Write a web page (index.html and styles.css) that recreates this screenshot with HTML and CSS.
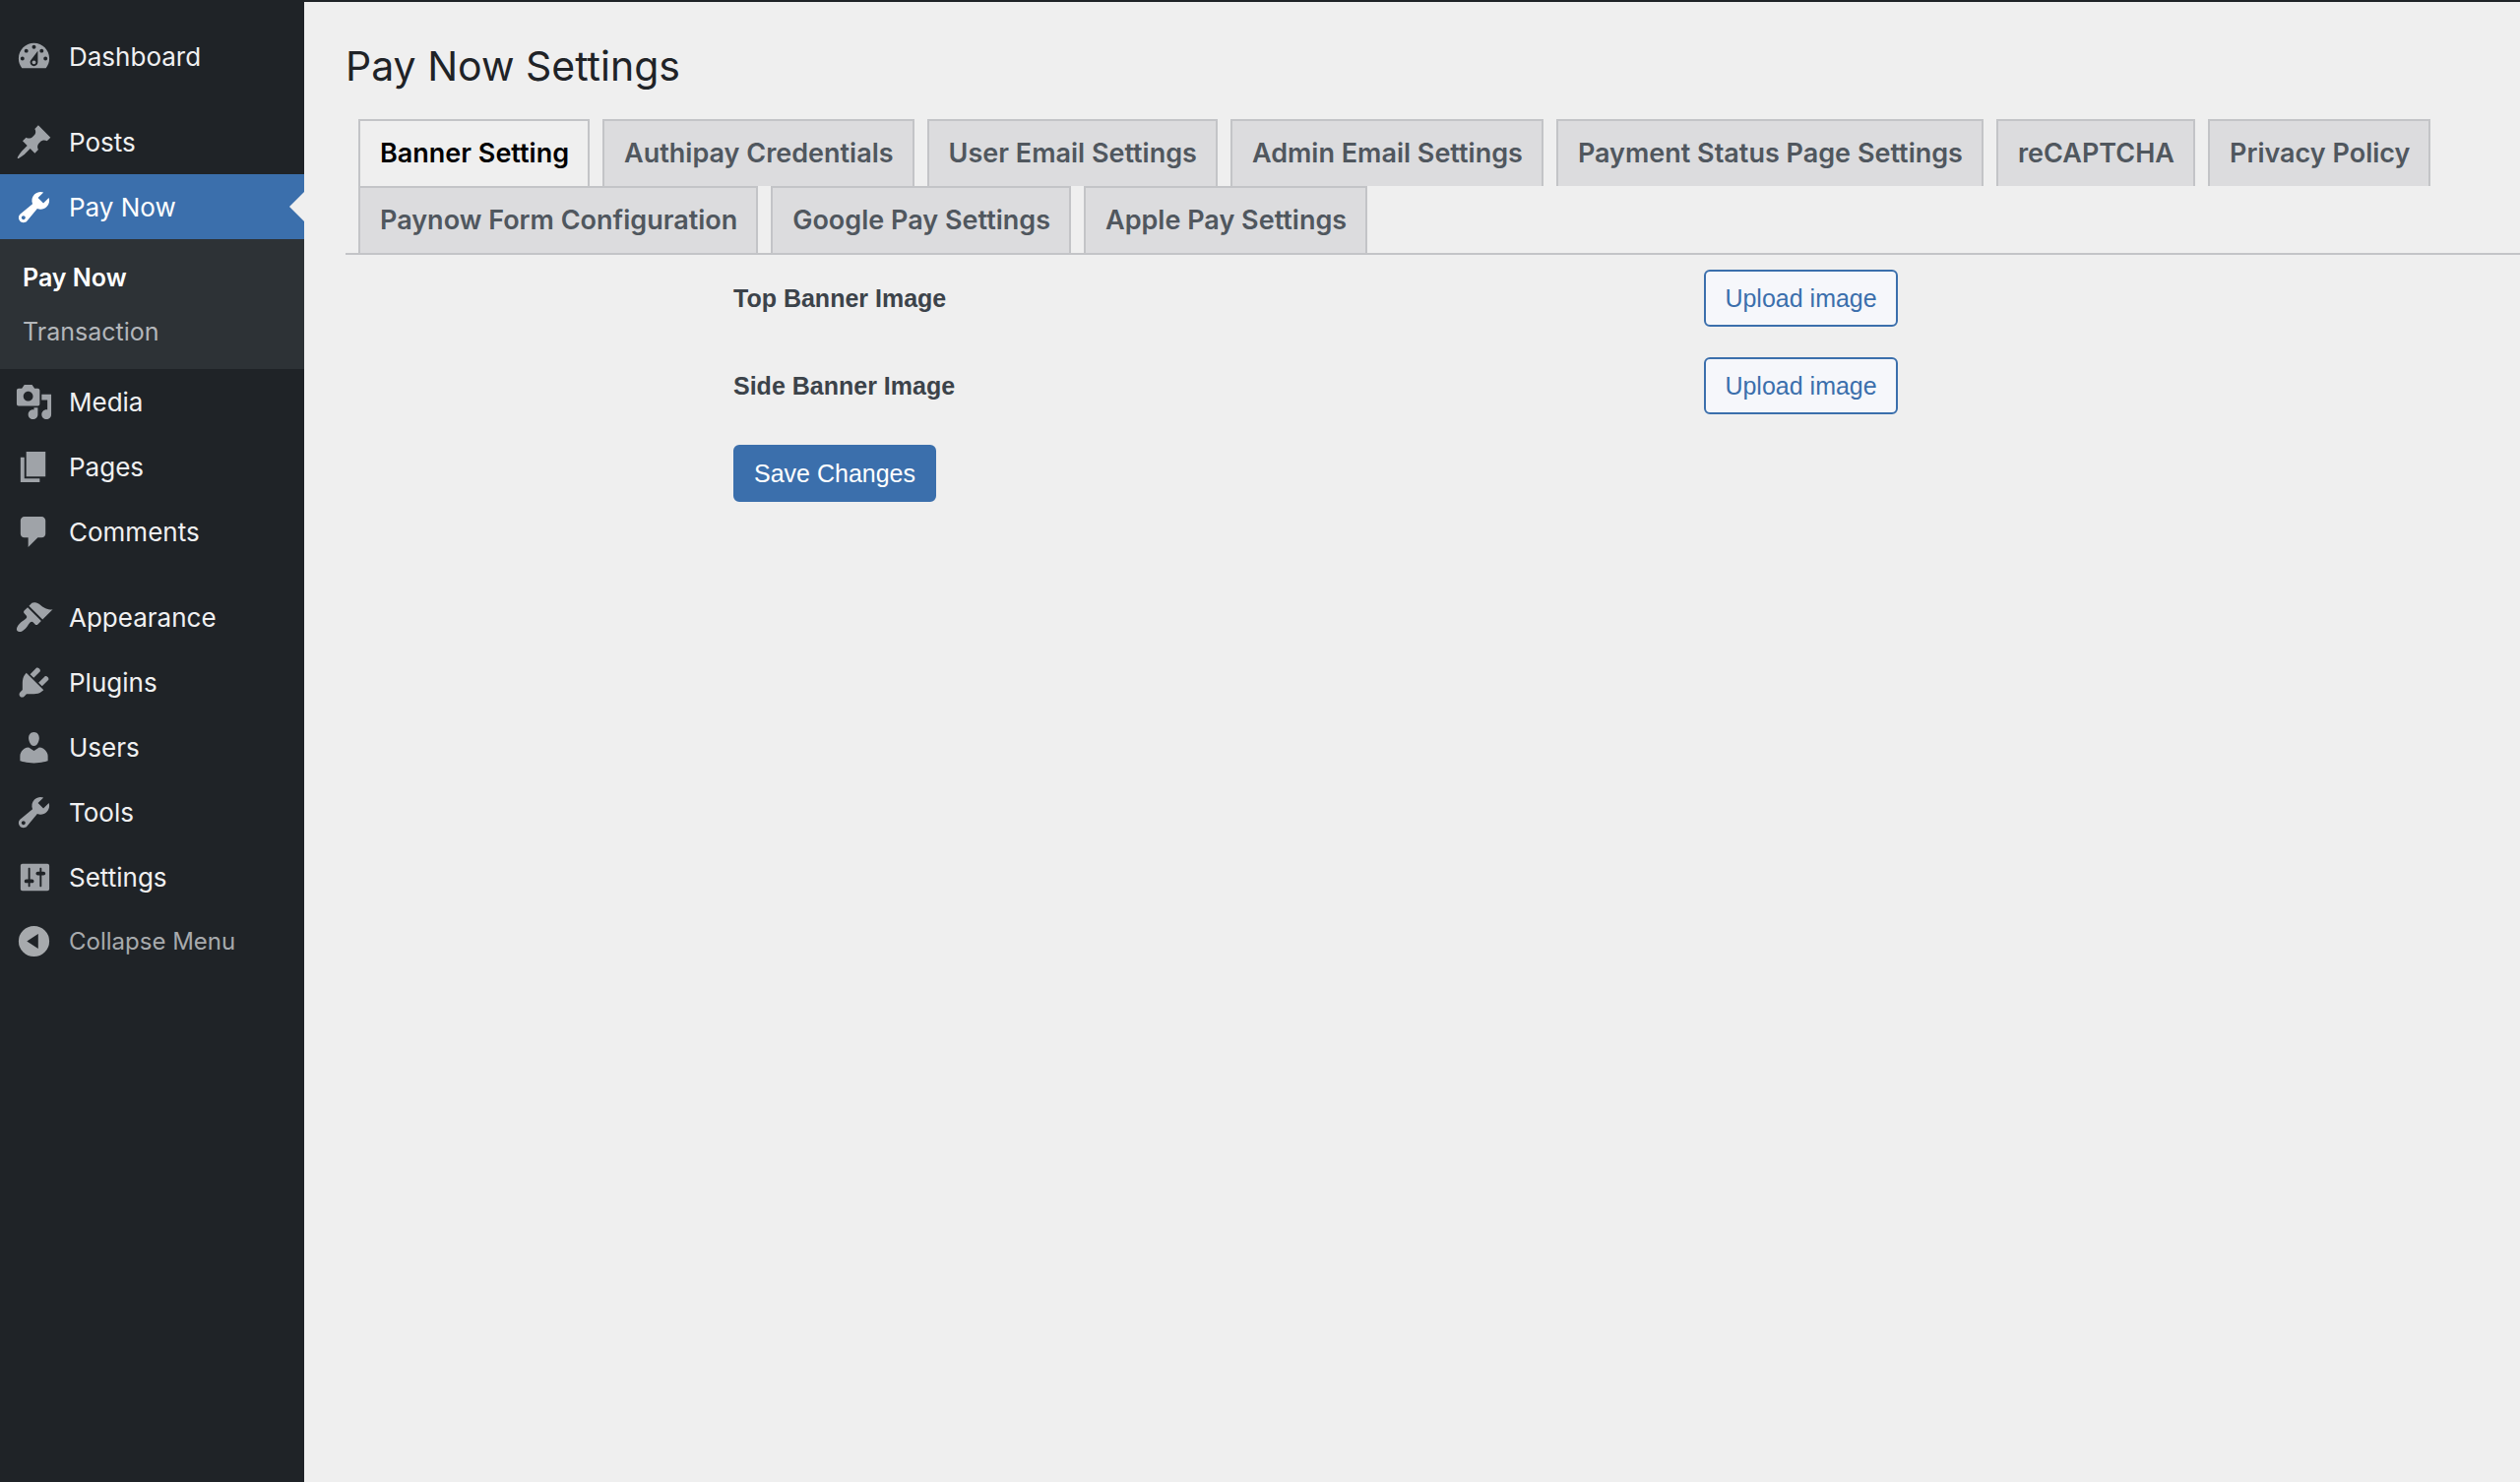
FILE: index.html
```html
<!DOCTYPE html>
<html lang="en">
<head>
    <meta charset="UTF-8">
    <meta name="viewport" content="width=device-width, initial-scale=1.0">
    <title>Pay Now Settings</title>
    <link rel="stylesheet" href="styles.css">
</head>
<body>
    <nav class="sidebar" aria-label="Main menu">
        <ul class="menu">
            <li>
                <a href="#"><svg class="icon" viewBox="0 0 20 20"><path fill-rule="evenodd" d="M3.76 16h12.48c1.1-1.37 1.76-3.11 1.76-5 0-4.42-3.58-8-8-8s-8 3.58-8 8c0 1.89.66 3.63 1.76 5zM10 4c.55 0 1 .45 1 1s-.45 1-1 1-1-.45-1-1 .45-1 1-1zM6 6c.55 0 1 .45 1 1s-.45 1-1 1-1-.45-1-1 .45-1 1-1zm8 0c.55 0 1 .45 1 1s-.45 1-1 1-1-.45-1-1 .45-1 1-1zm-5.37 5.55L12 7v6c0 1.1-.9 2-2 2s-2-.9-2-2c0-.57.24-1.08.63-1.45zM4 10c.55 0 1 .45 1 1s-.45 1-1 1-1-.45-1-1 .45-1 1-1zm12 0c.55 0 1 .45 1 1s-.45 1-1 1-1-.45-1-1 .45-1 1-1zm-5 3c0-.55-.45-1-1-1s-1 .45-1 1 .45 1 1 1 1-.45 1-1z"/></svg>Dashboard</a>
            </li>
            <li class="group">
                <a href="#"><svg class="icon" viewBox="0 0 20 20"><path d="M10.44 3.02l1.82-1.82 6.36 6.35-1.83 1.82c-1.05-.68-2.48-.57-3.41.36l-.75.75c-.92.93-1.04 2.35-.35 3.41l-1.83 1.82-2.41-2.41-2.8 2.79c-.42.42-3.38 2.71-3.8 2.29s1.86-3.39 2.28-3.81l2.79-2.79L4.1 9.36l1.83-1.82c1.05.69 2.48.57 3.4-.36l.75-.75c.93-.92 1.05-2.35.36-3.41z"/></svg>Posts</a>
            </li>
            <li class="current">
                <a href="#"><svg class="icon" viewBox="0 0 20 20"><path fill-rule="evenodd" d="M16.68 9.77c-1.34 1.34-3.3 1.67-4.95.99l-5.41 6.52c-.99.99-2.59.99-3.58 0s-.99-2.59 0-3.57l6.52-5.42c-.68-1.65-.35-3.61.99-4.95 1.28-1.28 3.12-1.62 4.72-1.06l-2.89 2.89 2.82 2.82 2.86-2.87c.53 1.58.18 3.39-1.08 4.65zM3.81 16.21c.4.39 1.04.39 1.43 0 .4-.4.4-1.04 0-1.43-.39-.4-1.03-.4-1.43 0-.39.39-.39 1.03 0 1.43z"/></svg>Pay Now</a>
                <ul class="submenu">
                    <li><a class="active" href="#">Pay Now</a></li>
                    <li><a href="#">Transaction</a></li>
                </ul>
            </li>
            <li>
                <a href="#"><svg class="icon" viewBox="0 0 20 20"><path fill-rule="evenodd" d="M13 11V4c0-.55-.45-1-1-1h-1.67L9 1H5L3.67 3H2c-.55 0-1 .45-1 1v7c0 .55.45 1 1 1h10c.55 0 1-.45 1-1zM7 4.5c1.38 0 2.5 1.12 2.5 2.5S8.38 9.5 7 9.5 4.5 8.38 4.5 7 5.62 4.5 7 4.5zM14 6h5v10.5c0 1.38-1.12 2.5-2.5 2.5S14 17.88 14 16.5s1.12-2.5 2.5-2.5c.17 0 .34.02.5.05V9h-3V6zm-4 8.05V13h2v3.5c0 1.38-1.12 2.5-2.5 2.5S7 17.88 7 16.5 8.12 14 9.5 14c.17 0 .34.02.5.05z"/></svg>Media</a>
            </li>
            <li>
                <a href="#"><svg class="icon" viewBox="0 0 20 20"><path d="M6 15V2h10v13H6zm-1 1h8v2H3V5h2v11z"/></svg>Pages</a>
            </li>
            <li>
                <a href="#"><svg class="icon" viewBox="0 0 20 20"><path d="M5 2h9c1.1 0 2 .9 2 2v7c0 1.1-.9 2-2 2h-2l-5 5v-5H5c-1.1 0-2-.9-2-2V4c0-1.1.9-2 2-2z"/></svg>Comments</a>
            </li>
            <li class="group">
                <a href="#"><svg class="icon" viewBox="0 0 20 20"><path d="M14.48 11.06L7.41 3.99l1.5-1.5c.5-.56 2.3-.47 3.51.32 1.21.8 1.43 1.28 2.91 2.1 1.18.64 2.45 1.26 4.45.85zm-.71.71L6.7 4.7 4.93 6.47c-.39.39-.39 1.02 0 1.41l1.06 1.06c.39.39.39 1.03 0 1.42-.6.6-1.43 1.11-2.21 1.69-.35.26-.7.53-1.01.84C1.43 14.23.4 16.08 1.4 17.07c.99 1 2.84-.03 4.18-1.36.31-.31.58-.66.85-1.02.57-.78 1.08-1.61 1.69-2.21.39-.39 1.02-.39 1.41 0l1.06 1.06c.39.39 1.02.39 1.41 0z"/></svg>Appearance</a>
            </li>
            <li>
                <a href="#"><svg class="icon" viewBox="0 0 20 20"><path d="M13.11 4.36L9.87 7.6 8 5.73l3.24-3.24c.35-.34 1.05-.2 1.56.32.52.51.66 1.21.31 1.55zm-8 1.77l.91-1.12 9.01 9.01-1.19.84c-.71.71-2.63 1.16-3.82 1.16H6.14L4.9 17.26c-.59.59-1.54.59-2.12 0-.59-.58-.59-1.53 0-2.12l1.24-1.24v-3.88c0-1.13.4-3.19 1.09-3.89zm7.26 3.97l3.24-3.24c.34-.35 1.04-.21 1.55.31.52.51.66 1.21.31 1.55l-3.24 3.25z"/></svg>Plugins</a>
            </li>
            <li>
                <a href="#"><svg class="icon" viewBox="0 0 20 20"><path d="M10 9.25c-2.27 0-2.73-3.44-2.73-3.44C7 4.02 7.82 2 9.97 2c2.16 0 2.98 2.02 2.71 3.81 0 0-.41 3.44-2.68 3.44zm0 2.57L12.72 10c2.39 0 4.52 2.33 4.52 4.53v2.49s-3.65 1.13-7.24 1.13c-3.65 0-7.24-1.13-7.24-1.13v-2.49c0-2.25 1.94-4.48 4.47-4.48z"/></svg>Users</a>
            </li>
            <li>
                <a href="#"><svg class="icon" viewBox="0 0 20 20"><path fill-rule="evenodd" d="M16.68 9.77c-1.34 1.34-3.3 1.67-4.95.99l-5.41 6.52c-.99.99-2.59.99-3.58 0s-.99-2.59 0-3.57l6.52-5.42c-.68-1.65-.35-3.61.99-4.95 1.28-1.28 3.12-1.62 4.72-1.06l-2.89 2.89 2.82 2.82 2.86-2.87c.53 1.58.18 3.39-1.08 4.65zM3.81 16.21c.4.39 1.04.39 1.43 0 .4-.4.4-1.04 0-1.43-.39-.4-1.03-.4-1.43 0-.39.39-.39 1.03 0 1.43z"/></svg>Tools</a>
            </li>
            <li>
                <a href="#"><svg class="icon" viewBox="0 0 20 20"><path fill-rule="evenodd" d="M18 16V4c0-.55-.45-1-1-1H4c-.55 0-1 .45-1 1v12c0 .55.45 1 1 1h13c.55 0 1-.45 1-1zM8 11h1c.55 0 1 .45 1 1s-.45 1-1 1H8v1.5c0 .28-.22.5-.5.5s-.5-.22-.5-.5V13H6c-.55 0-1-.45-1-1s.45-1 1-1h1V5.5c0-.28.22-.5.5-.5s.5.22.5.5V11zm5-2h-1c-.55 0-1-.45-1-1s.45-1 1-1h1V5.5c0-.28.22-.5.5-.5s.5.22.5.5V7h1c.55 0 1 .45 1 1s-.45 1-1 1h-1v5.5c0 .28-.22.5-.5.5s-.5-.22-.5-.5V9z"/></svg>Settings</a>
            </li>
        </ul>
        <button type="button" class="collapse"><svg class="icon" viewBox="0 0 20 20"><path fill-rule="evenodd" d="M10 2a8 8 0 1 0 0 16 8 8 0 0 0 0-16zM12.2 6.2v7.6L6.3 10z"/></svg>Collapse Menu</button>
    </nav>

    <main class="content">
        <h1>Pay Now Settings</h1>
        <nav class="tabs" aria-label="Settings sections">
            <a class="tab active" href="#">Banner Setting</a>
            <a class="tab" href="#">Authipay Credentials</a>
            <a class="tab" href="#">User Email Settings</a>
            <a class="tab" href="#">Admin Email Settings</a>
            <a class="tab" href="#">Payment Status Page Settings</a>
            <a class="tab" href="#">reCAPTCHA</a>
            <a class="tab" href="#">Privacy Policy</a>
            <a class="tab" href="#">Paynow Form Configuration</a>
            <a class="tab" href="#">Google Pay Settings</a>
            <a class="tab" href="#">Apple Pay Settings</a>
        </nav>

        <form class="banner-form">
            <div class="row">
                <label for="top-banner">Top Banner Image</label>
                <button type="button" id="top-banner" class="btn">Upload image</button>
            </div>
            <div class="row">
                <label for="side-banner">Side Banner Image</label>
                <button type="button" id="side-banner" class="btn">Upload image</button>
            </div>
            <button type="submit" class="btn btn-primary">Save Changes</button>
        </form>
    </main>
</body>
</html>
```
FILE: styles.css
```css
* {
    box-sizing: border-box;
}
body {
    margin: 0;
    display: flex;
    min-height: 100vh;
    border-top: 2px solid #1f2327;
    background-color: #efefef;
    font-family: Inter, "Liberation Sans", sans-serif;
    font-size: 26px;
}
ul {
    list-style: none;
    margin: 0;
    padding: 0;
}
a {
    text-decoration: none;
}

/* Sidebar */
.sidebar {
    flex: none;
    width: 309px;
    padding-top: 22px;
    background-color: #1f2327;
}
.menu > li > a,
.collapse {
    display: flex;
    align-items: center;
    gap: 16px;
    width: 100%;
    height: 66px;
    padding: 0 15px;
    color: #f0f0f1;
}
.icon {
    flex: none;
    width: 39px;
    height: 39px;
    fill: #9fa3a8;
}
.group {
    margin-top: 21px;
}
.menu > .current > a {
    position: relative;
    background-color: #3b6fac;
    color: #fff;
}
.current .icon {
    fill: #fff;
}
/* arrow pointing at the page content */
.current > a::after {
    content: "";
    position: absolute;
    right: 0;
    top: 18px;
    border: 15px solid transparent;
    border-left: 0;
    border-right-color: #efefef;
}
.submenu {
    padding: 12px 0 10px;
    background-color: #2d3236;
}
.submenu a {
    display: block;
    padding: 0 23px;
    font-size: 25px;
    line-height: 55px;
    color: #b3b6ba;
}
.submenu .active {
    color: #fff;
    font-weight: 600;
}
.collapse {
    height: 64px;
    border: none;
    background: none;
    font-family: inherit;
    font-size: 24px;
    color: #a7aaad;
    cursor: pointer;
}
.collapse .icon {
    fill: #a7aaad;
}

/* Page content */
.content {
    flex: 1;
    min-width: 0;
    padding: 36px 0 0 42px;
}
h1 {
    margin: 0;
    font-size: 41px;
    font-weight: 400;
    line-height: 58px;
    color: #1f2327;
}
.tabs {
    display: flex;
    flex-wrap: wrap;
    margin-top: 25px;
    border-bottom: 2px solid #c3c4c7;
}
.tab {
    margin-left: 13px;
    padding: 9px 19px 9px 20px;
    border: 2px solid #c3c4c7;
    border-bottom: none;
    background-color: #dcdcde;
    font-size: 27px;
    font-weight: 600;
    line-height: 48px;
    color: #50575e;
}
.tab.active {
    background-color: #efefef;
    color: #000;
}

/* Banner form */
.banner-form {
    margin: 15px 0 0 394px;
    font-family: "Liberation Sans", Arial, sans-serif;
    font-size: 25px;
}
.row {
    display: grid;
    grid-template-columns: 25fr 21fr;
    align-items: center;
    margin-bottom: 31px;
}
.row label {
    font-weight: bold;
    color: #3c434a;
}
.btn {
    justify-self: start;
    height: 58px;
    padding: 0 19px;
    border: 2px solid #3b6fac;
    border-radius: 6px;
    background-color: #f6f7fb;
    font-family: inherit;
    font-size: 25px;
    color: #3b6fac;
    cursor: pointer;
}
.btn-primary {
    background-color: #3b6fac;
    color: #fff;
}
```
